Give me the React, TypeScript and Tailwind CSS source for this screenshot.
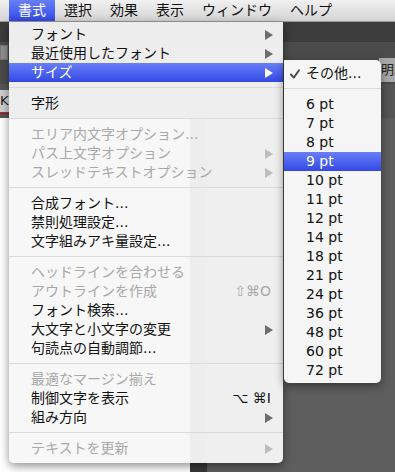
import React from 'react';

type Item =
  | 'sep'
  | {
      label: string;
      arrow?: boolean;
      disabled?: boolean;
      active?: boolean;
      shortcut?: string;
    };

const items: Item[] = [
  { label: 'フォント', arrow: true },
  { label: '最近使用したフォント', arrow: true },
  { label: 'サイズ', arrow: true, active: true },
  'sep',
  { label: '字形' },
  'sep',
  { label: 'エリア内文字オプション...', disabled: true },
  { label: 'パス上文字オプション', disabled: true, arrow: true },
  { label: 'スレッドテキストオプション', disabled: true, arrow: true },
  'sep',
  { label: '合成フォント...' },
  { label: '禁則処理設定...' },
  { label: '文字組みアキ量設定...' },
  'sep',
  { label: 'ヘッドラインを合わせる', disabled: true },
  { label: 'アウトラインを作成', disabled: true, shortcut: '⇧⌘O' },
  { label: 'フォント検索...' },
  { label: '大文字と小文字の変更', arrow: true },
  { label: '句読点の自動調節...' },
  'sep',
  { label: '最適なマージン揃え', disabled: true },
  { label: '制御文字を表示', shortcut: '⌥ ⌘I' },
  { label: '組み方向', arrow: true },
  'sep',
  { label: 'テキストを更新', disabled: true, arrow: true },
];

const sizes = ['6', '7', '8', '9', '10', '11', '12', '14', '18', '21', '24', '36', '48', '60', '72'];

const menuBar = ['書式', '選択', '効果', '表示', 'ウィンドウ', 'ヘルプ'];

function Arrow({ color }: { color: string }) {
  return (
    <svg width="8" height="10" viewBox="0 0 8 10" className="shrink-0">
      <polygon points="0,0 8,5 0,10" fill={color} />
    </svg>
  );
}

export default function App() {
  return (
    <div
      className="relative h-[472px] w-[395px] overflow-hidden bg-[#5e5e5e] text-[14px]"
      style={{ fontFamily: '"DejaVu Sans", "Noto Sans CJK JP", sans-serif' }}
    >
      {/* menu bar */}
      <div className="flex h-[22px] border-b border-[#9a9a9a] bg-gradient-to-b from-[#f1f1f1] to-[#d4d4d4] pl-[9px] text-[#111]">
        {menuBar.map((m, i) => (
          <div
            key={m}
            className={
              i === 0
                ? 'flex h-full items-center bg-gradient-to-b from-[#6a7ef7] to-[#3447e6] px-[9px] text-white'
                : 'flex h-full items-center px-[9px]'
            }
          >
            {m}
          </div>
        ))}
      </div>

      {/* app behind the menu */}
      <div className="flex h-[20px] bg-[#3c3c3c]" />
      <div className="flex h-[42px] items-start justify-between bg-[#4b4b4b]">
        <div className="mt-[3px] h-[15px] w-[8px] border border-[#777] bg-[#8e8e8e]" />
        <div className="mt-[16px] flex h-[24px] w-[16px] items-center overflow-hidden whitespace-nowrap bg-[#a9a9a9] pl-[2px] text-[13px] text-[#222]">
          明朝体
        </div>
      </div>
      <div className="flex h-[34px] flex-col bg-[#555]">
        <div className="mt-[6px] flex h-[22px] w-[9px] items-center overflow-hidden bg-[#cfcfcf] text-[13px] text-[#222]">K</div>
        <div className="mt-[1px] h-px w-[12px] bg-[#d0021b]" />
      </div>
      <div className="flex h-[354px]">
        <div className="w-[190px] bg-white" />
        <div className="w-[17px] bg-[#3a3a3a]" />
        <div className="flex-1 bg-[#5e5e5e]" />
      </div>

      {/* main menu */}
      <div className="absolute left-[9px] top-[22px] w-[274px] rounded-b-[5px] bg-[#f7f7f7]/95 pb-[5px] pt-[3px] shadow-[0_3px_10px_rgba(0,0,0,0.45)]">
        {items.map((it, i) =>
          it === 'sep' ? (
            <div key={i} className="mb-[6px] mt-[5px] h-px bg-[#dadada]" />
          ) : (
            <div
              key={i}
              className={
                it.active
                  ? 'flex h-[19px] items-center bg-gradient-to-b from-[#6a7ef7] to-[#3447e6] pl-[22px] pr-[10px] leading-[19px] text-white'
                  : it.disabled
                  ? 'flex h-[19px] items-center pl-[22px] pr-[10px] leading-[19px] text-[#a8a8a8]'
                  : 'flex h-[19px] items-center pl-[22px] pr-[10px] leading-[19px] text-[#111]'
              }
            >
              <span className="flex-1 whitespace-nowrap">{it.label}</span>
              {it.shortcut && <span className="mr-[2px] whitespace-pre text-[14px]">{it.shortcut}</span>}
              {it.arrow && (
                <Arrow color={it.active ? '#ffffff' : it.disabled ? '#bdbdbd' : '#6e6e6e'} />
              )}
            </div>
          )
        )}
      </div>

      {/* size submenu */}
      <div className="absolute left-[284px] top-[60px] w-[97px] rounded-[5px] rounded-tl-none bg-[#f5f5f5] pb-[3px] pt-[4px] text-[#111] shadow-[0_3px_10px_rgba(0,0,0,0.45)]">
        <div className="flex h-[19px] items-center pl-[6px] leading-[19px]">
          <span className="flex w-[16px] items-center">
            <svg width="10" height="10" viewBox="0 0 10 10">
              <path d="M1 5.5 L3.8 8.6 L9 1.2" fill="none" stroke="#4d4d4d" strokeWidth="1.9" strokeLinecap="round" strokeLinejoin="round" />
            </svg>
          </span>
          <span>その他...</span>
        </div>
        <div className="mb-[6px] mt-[5px] h-px bg-[#dadada]" />
        {sizes.map((s) => (
          <div
            key={s}
            className={
              s === '9'
                ? 'flex h-[19px] items-center bg-gradient-to-b from-[#6a7ef7] to-[#3447e6] pl-[22px] leading-[19px] text-white'
                : 'flex h-[19px] items-center pl-[22px] leading-[19px]'
            }
          >
            {s} pt
          </div>
        ))}
      </div>
    </div>
  );
}
